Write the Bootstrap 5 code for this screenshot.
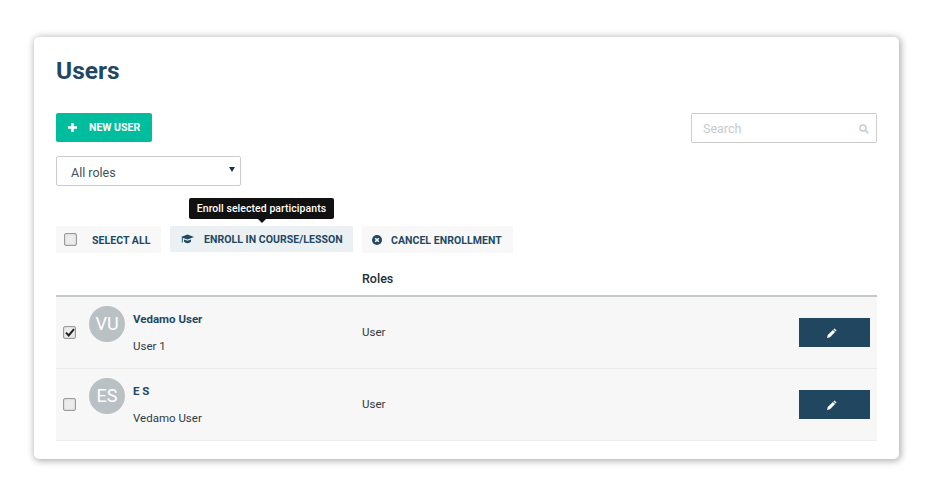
<!DOCTYPE html>
<html lang="en">
<head>
    <meta charset="UTF-8">
    <meta name="viewport" content="width=device-width, initial-scale=1.0">
    <title>Users</title>
    <link href="https://cdn.jsdelivr.net/npm/bootstrap@5.3.0/dist/css/bootstrap.min.css" rel="stylesheet">
    <style>
        body { background: #fff; font-family: Roboto, "Liberation Sans", sans-serif; color: #2b3a44; font-size: 12px; }
        .page-wrap { padding: 37px 34px 36px; width: 933px; height: 495px; overflow: hidden; }
        .users-panel { height: 422px; padding: 19px 22px 0; border-radius: 5px; box-shadow: 1px 1px 7px 1px rgba(0,0,0,.32); background: #fff; }
        .users-title { font-size: 24.5px; font-weight: 700; color: #1f4864; line-height: 30px; margin: 0 0 27px; }
        .top-bar { height: 30px; margin-bottom: 13px; }
        .btn-new { width: 96px; height: 29px; background: #00bd9d; color: #fff; border: 0; border-radius: 2px; font-size: 10.5px; font-weight: 700; padding: 0 0 0 12px; gap: 12px; }
        .search-box { width: 186px; height: 30px; border: 1px solid #ccc; border-radius: 2px; padding: 2px 7px 0 11px; color: #c3cbd0; font-size: 12.5px; }
        .role-select { width: 185px; height: 30px; border: 1px solid #ccc; border-radius: 2px; padding: 4px 5px 0 14px; font-size: 12.5px; color: #45525b; margin-bottom: 40px; }
        .caret-down { width: 0; height: 0; margin-top: -8px; border-left: 3px solid transparent; border-right: 3px solid transparent; border-top: 5px solid #1f3442; }
        .action-bar { gap: 9px; height: 27px; }
        .action-btn { height: 27px; background: #f8f8f8; font-size: 10.5px; font-weight: 700; color: #1f4864; letter-spacing: .05px; white-space: nowrap; }
        .action-btn > span:last-child { padding-top: 2px; }
        .action-btn.is-hover { background: #ebf0f2; height: 26px; position: relative; width: 183px; padding-left: 11px; gap: 10px; }
        .select-btn { width: 105px; padding-left: 8px; gap: 15px; }
        .cancel-btn { width: 151px; padding-left: 10px; gap: 9px; }
        .fake-check { width: 13px; height: 13px; flex: none; background: #ececec; border: 1px solid #9a9a9a; border-radius: 2px; box-shadow: inset 0 0 2px #bbb; }
        .tip-box { position: absolute; left: 19px; top: -28px; width: 145px; height: 21px; background: #111; color: #fff; border-radius: 2px; font-size: 10.5px; font-weight: 500; text-align: center; line-height: 22px; white-space: nowrap; }
        .tip-box::after { content: ""; position: absolute; left: 69px; bottom: -4px; border-left: 4px solid transparent; border-right: 4px solid transparent; border-top: 4px solid #111; }
        .head-row { height: 44px; padding-top: 18px; border-bottom: 2px solid #c4c9cc; padding-left: 306px; font-size: 12.5px; font-weight: 500; color: #222f38; line-height: 16px; }
        .user-row { height: 72px; background: #f7f7f7; border-bottom: 1px solid #ececec; padding: 9px 7px 0 7px; }
        .user-row .fake-check { margin-top: 20px; margin-right: 13px; }
        .avatar-dot { width: 36px; height: 36px; flex: none; border-radius: 50%; background: #bac1c5; color: #fff; font-size: 18px; line-height: 36px; text-align: center; margin-right: 8px; }
        .name-col { width: 229px; padding-top: 6px; font-size: 11.5px; line-height: 14px; color: #2e3b45; }
        .name-col strong { display: block; color: #1f4864; font-weight: 700; margin-bottom: 13px; }
        .role-col { font-size: 11.5px; color: #2e3b45; padding-top: 19px; line-height: 14px; }
        .edit-btn { width: 71px; height: 29px; background: #21465f; margin-top: 12px; margin-left: auto; padding-right: 6px; }
    </style>
</head>
<body>
    <div class="page-wrap">
        <div class="users-panel">
            <h1 class="users-title">Users</h1>

            <div class="top-bar d-flex justify-content-between align-items-start">
                <div class="btn-new d-flex align-items-center">
                    <svg width="9" height="9" viewBox="0 0 9 9"><path d="M3.2 0h2.6v3.2H9v2.6H5.8V9H3.2V5.8H0V3.2h3.2z" fill="#fff"/></svg>
                    <span>NEW USER</span>
                </div>
                <div class="search-box d-flex justify-content-between align-items-center">
                    <span>Search</span>
                    <svg width="10" height="10" viewBox="0 0 10 10"><circle cx="4" cy="4" r="3" fill="none" stroke="#c3cfd6" stroke-width="1.6"/><path d="M6.2 6.2 9.2 9.2" stroke="#c3cfd6" stroke-width="1.8"/></svg>
                </div>
            </div>

            <div class="role-select d-flex justify-content-between align-items-center">
                <span>All roles</span>
                <span class="caret-down"></span>
            </div>

            <div class="action-bar d-flex">
                <div class="action-btn select-btn d-flex align-items-center">
                    <span class="fake-check"></span>
                    <span>SELECT ALL</span>
                </div>
                <div class="action-btn is-hover d-flex align-items-center">
                    <div class="tip-box">Enroll selected participants</div>
                    <svg width="13" height="10" viewBox="0 0 13 10"><path d="M6.5 0.5 13 3 6.5 5.6 2.2 3.9C1.8 4.3 1.7 4.8 1.7 5.4V8.6H.8V5.2C.8 4.5 1 3.9 1.4 3.5L0 3zM3 5.4 6.5 6.8 10 5.4V7.6C9 8.8 8 9.3 6.5 9.3 5 9.3 4 8.8 3 7.6z" fill="#1f4864"/></svg>
                    <span>ENROLL IN COURSE/LESSON</span>
                </div>
                <div class="action-btn cancel-btn d-flex align-items-center">
                    <svg width="10" height="10" viewBox="0 0 10 10"><circle cx="5" cy="5" r="5" fill="#1f4864"/><path d="M3.2 3.2 6.8 6.8M6.8 3.2 3.2 6.8" stroke="#f8f8f8" stroke-width="1.6"/></svg>
                    <span>CANCEL ENROLLMENT</span>
                </div>
            </div>

            <div class="head-row">Roles</div>

            <div class="user-row d-flex">
                <span class="fake-check d-flex align-items-center justify-content-center">
                    <svg width="10" height="9" viewBox="0 0 10 9"><path d="M1 4.6 3.7 7.4 9 1.2" fill="none" stroke="#222" stroke-width="2"/></svg>
                </span>
                <div class="avatar-dot">VU</div>
                <div class="name-col"><strong>Vedamo User</strong>User 1</div>
                <div class="role-col">User</div>
                <div class="edit-btn d-flex align-items-center justify-content-center">
                    <svg width="10" height="10" viewBox="0 0 10 10"><path d="M7.4.4 9.6 2.6 8.6 3.6 6.4 1.4zM5.9 1.9 8.1 4.1 3 9.2 0 10 .8 7z" fill="#fff"/></svg>
                </div>
            </div>
            <div class="user-row d-flex">
                <span class="fake-check"></span>
                <div class="avatar-dot">ES</div>
                <div class="name-col"><strong>E S</strong>Vedamo User</div>
                <div class="role-col">User</div>
                <div class="edit-btn d-flex align-items-center justify-content-center">
                    <svg width="10" height="10" viewBox="0 0 10 10"><path d="M7.4.4 9.6 2.6 8.6 3.6 6.4 1.4zM5.9 1.9 8.1 4.1 3 9.2 0 10 .8 7z" fill="#fff"/></svg>
                </div>
            </div>
        </div>
    </div>
    <script src="https://cdn.jsdelivr.net/npm/bootstrap@5.3.0/dist/js/bootstrap.bundle.min.js"></script>
</body>
</html>
